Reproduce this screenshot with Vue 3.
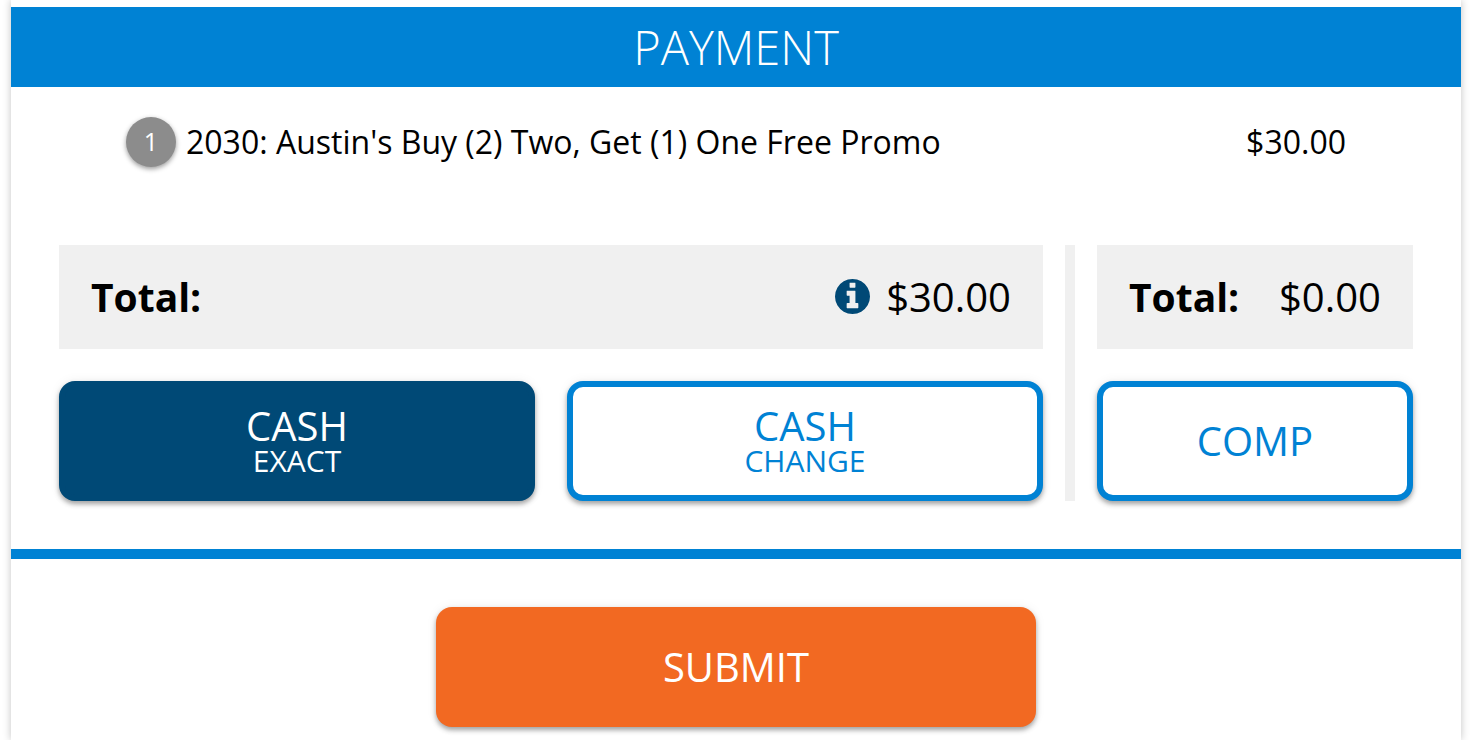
<script setup>
  import { ref } from 'vue';

  const items = [
    { quantity: 1, name: "2030: Austin's Buy (2) Two, Get (1) One Free Promo", price: '$30.00' }
  ];

  const method = ref('exact');
</script>

<template>
  <main class="payment">
    <h1 class="title">PAYMENT</h1>

    <ul class="items">
      <li v-for="item in items" :key="item.name" class="item">
        <span class="quantity">{{ item.quantity }}</span>
        <span class="name">{{ item.name }}</span>
        <span class="price">{{ item.price }}</span>
      </li>
    </ul>

    <div class="methods">
      <section class="cash">
        <div class="total">
          <strong>Total:</strong>
          <span class="amount">
            <button class="info" type="button" aria-label="Total details">
              <svg viewBox="0 128 1536 1536" aria-hidden="true">
                <path
                    fill="currentColor"
                    d="M1024 1376v-160q0-14-9-23t-23-9h-96v-512q0-14-9-23t-23-9h-320q-14 0-23 9t-9 23v160q0 14 9 23t23 9h96v320h-96q-14 0-23 9t-9 23v160q0 14 9 23t23 9h448q14 0 23-9t9-23zm-128-896v-160q0-14-9-23t-23-9h-192q-14 0-23 9t-9 23v160q0 14 9 23t23 9h192q14 0 23-9t9-23zm640 416q0 209-103 385.5t-279.5 279.5-385.5 103-385.5-103-279.5-279.5-103-385.5 103-385.5 279.5-279.5 385.5-103 385.5 103 279.5 279.5 103 385.5z"
                />
              </svg>
            </button>
            $30.00
          </span>
        </div>
        <div class="buttons">
          <button class="btn" :class="{ active: method === 'exact' }" type="button" @click="method = 'exact'">
            CASH
            <small>EXACT</small>
          </button>
          <button class="btn" :class="{ active: method === 'change' }" type="button" @click="method = 'change'">
            CASH
            <small>CHANGE</small>
          </button>
        </div>
      </section>

      <div class="divider"></div>

      <section class="comp">
        <div class="total">
          <strong>Total:</strong>
          <span class="amount">$0.00</span>
        </div>
        <div class="buttons">
          <button class="btn" :class="{ active: method === 'comp' }" type="button" @click="method = 'comp'">
            COMP
          </button>
        </div>
      </section>
    </div>

    <footer class="footer">
      <button class="submit" type="button">SUBMIT</button>
    </footer>
  </main>
</template>

<style>
  body {
    background: #fff;
  }
</style>

<style scoped>
  .payment {
    box-sizing: border-box;
    min-height: 100vh;
    margin: 0 9px 0 11px;
    padding-top: 7px;
    background: #fff;
    box-shadow: 0 0 8px rgba(0, 0, 0, 0.24);
    font-family: "Open Sans", sans-serif;
    color: #000;
  }

  .title {
    margin: 0;
    background: #0082d4;
    color: #fff;
    font-size: 47px;
    font-weight: 300;
    line-height: 80px;
    text-align: center;
  }

  .items {
    margin: 0;
    padding: 30px 115px 0;
    list-style: none;
  }

  .item {
    display: flex;
    gap: 10px;
    height: 50px;
    font-size: 32px;
    line-height: 50px;
  }

  .quantity {
    width: 50px;
    border-radius: 50%;
    background: #8c8c8c;
    box-shadow: 0 2px 5px rgba(0, 0, 0, 0.4);
    color: #fff;
    font-size: 25px;
    line-height: 48px;
    text-align: center;
  }

  .name {
    flex: 1;
  }

  .methods {
    display: flex;
    gap: 22px;
    padding: 78px 48px 48px;
  }

  .cash {
    flex: 1;
  }

  .comp {
    width: 316px;
  }

  .divider {
    width: 10px;
    background: #f0f0f0;
  }

  .total {
    box-sizing: border-box;
    display: flex;
    align-items: center;
    justify-content: space-between;
    height: 104px;
    padding: 0 32px 2px;
    background: #f0f0f0;
    font-size: 40px;
  }

  .total strong {
    font-size: 39px;
  }

  .amount {
    display: flex;
    align-items: center;
    gap: 16px;
  }

  .info {
    padding: 0;
    border: 0;
    background: none;
    color: #004976;
    cursor: pointer;
  }

  .info svg {
    display: block;
    width: 35px;
    height: 35px;
  }

  .buttons {
    display: flex;
    gap: 32px;
    margin-top: 32px;
  }

  .btn,
  .submit {
    height: 120px;
    border-radius: 16px;
    box-shadow: 0 3px 5px rgba(0, 0, 0, 0.35), 0 0 12px rgba(0, 0, 0, 0.06);
    font-family: inherit;
    font-size: 40px;
    line-height: 40px;
    cursor: pointer;
  }

  .btn {
    flex: 1;
    padding: 0;
    border: 6px solid #0082d4;
    background: #fff;
    color: #0082d4;
  }

  .btn.active {
    border-color: #004976;
    background: #004976;
    color: #fff;
  }

  .btn small {
    display: block;
    font-size: 30px;
    line-height: 30px;
  }

  .footer {
    padding: 48px 20px 13px;
    border-top: 10px solid #0082d4;
    text-align: center;
  }

  .submit {
    width: 600px;
    max-width: 100%;
    border: 0;
    background: #f26922;
    color: #fff;
  }
</style>
